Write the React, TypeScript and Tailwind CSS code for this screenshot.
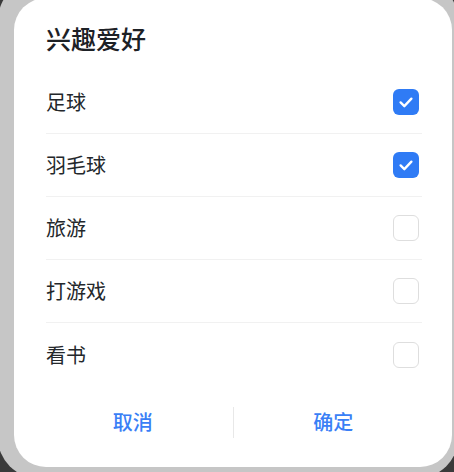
import { useState } from 'react';

const HOBBIES = ['足球', '羽毛球', '旅游', '打游戏', '看书'];

function CheckBox({ checked }: { checked: boolean }) {
    if (checked) {
        return (
            <div className="w-[26px] h-[26px] rounded-[6px] bg-[#2f7bf5] flex items-center justify-center">
                <svg width="20" height="20" viewBox="0 0 24 24" fill="none">
                    <polyline points="5.5 12.5 10 17 18.5 8" stroke="white" strokeWidth="2.8" strokeLinecap="round" strokeLinejoin="round" />
                </svg>
            </div>
        );
    }
    return <div className="w-[26px] h-[26px] rounded-[6px] border-[1.5px] border-[#dedede] bg-white" />;
}

export default function App() {
    const [selected, setSelected] = useState<string[]>(['足球', '羽毛球']);

    const toggle = (name: string) => {
        setSelected(s => (s.includes(name) ? s.filter(x => x !== name) : [...s, name]));
    };

    return (
        <div
            className="w-[454px] h-[472px] bg-[#3a3a3a] overflow-hidden"
            style={{ fontFamily: '"Noto Sans CJK SC", "Noto Sans", sans-serif' }}
        >
            <div className="-ml-[2px] -mt-[20px] w-[460px] h-[498px] rounded-[40px] bg-[#c6c6c6] pl-[16px] pt-[18px]">
                <div className="w-[438px] h-[469px] rounded-[32px] bg-white flex flex-col">
                    {/* Title */}
                    <div className="pl-[32px] pt-[25px] text-[25px] leading-[30px] font-medium text-[#1d2126]">兴趣爱好</div>

                    {/* Options */}
                    <div className="mt-[18px] pl-[32px] pr-[30px]">
                        {HOBBIES.map((name, i) => (
                            <div
                                key={name}
                                onClick={() => toggle(name)}
                                className={`h-[63px] flex items-center justify-between pr-[3px] ${i < HOBBIES.length - 1 ? 'border-b border-[#f1f1f1]' : ''}`}
                            >
                                <span className="text-[20px] text-[#23272b]">{name}</span>
                                <CheckBox checked={selected.includes(name)} />
                            </div>
                        ))}
                    </div>

                    {/* Actions */}
                    <div className="mt-[12px] mx-[19px] h-[48px] flex items-center">
                        <button className="flex-1 text-[20px] font-medium text-[#3a7ff6]">取消</button>
                        <div className="w-px h-[31px] bg-[#e8e8e8]" />
                        <button className="flex-1 text-[20px] font-medium text-[#3a7ff6]">确定</button>
                    </div>
                </div>
            </div>
        </div>
    );
}
